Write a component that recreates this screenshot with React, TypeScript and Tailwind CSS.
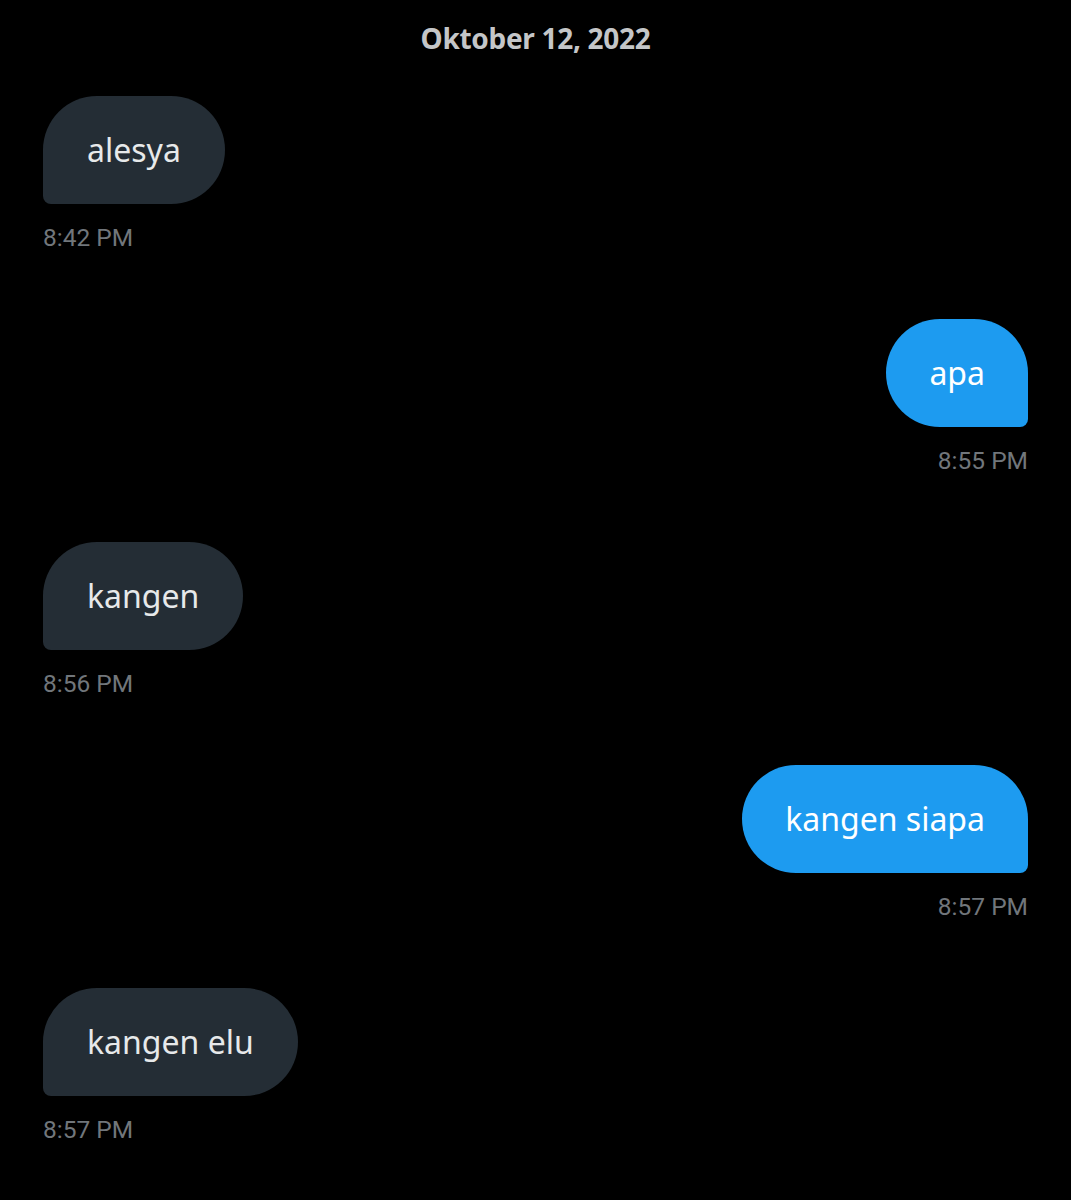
import React from "react";

type Msg = { text: string; time: string; mine: boolean };

const msgs: Msg[] = [
  { text: "alesya", time: "8:42 PM", mine: false },
  { text: "apa", time: "8:55 PM", mine: true },
  { text: "kangen", time: "8:56 PM", mine: false },
  { text: "kangen siapa", time: "8:57 PM", mine: true },
  { text: "kangen elu", time: "8:57 PM", mine: false },
];

export default function App() {
  return (
    <div
      className="w-[1071px] h-[1200px] bg-black overflow-hidden flex flex-col"
      style={{ fontFamily: "'Noto Sans', Roboto, sans-serif" }}
    >
      <div className="h-[76px] flex items-center justify-center">
        <span className="text-[28px] font-bold text-[#c4c6c8] tracking-[-0.3px]">
          Oktober 12, 2022
        </span>
      </div>
      <div className="flex flex-col px-[43px] pt-[20px] gap-[69px]">
        {msgs.map((m, i) => (
          <div key={i} className={m.mine ? "flex flex-col items-end" : "flex flex-col items-start"}>
            <div
              className={
                m.mine
                  ? "h-[108px] px-[43px] flex items-center bg-[#1d9bf0] text-white text-[32px] rounded-[54px] rounded-br-[8px]"
                  : "h-[108px] px-[44px] flex items-center bg-[#242d35] text-[#e7e9ea] text-[32px] rounded-[54px] rounded-bl-[8px]"
              }
            >
              {m.text}
            </div>
            <div className="mt-[22px] h-[24px] leading-[24px] text-[23px] text-[#71767b]" style={{ fontFamily: "Roboto, sans-serif", fontSize: "24.5px" }}>
              {m.time}
            </div>
          </div>
        ))}
      </div>
    </div>
  );
}
